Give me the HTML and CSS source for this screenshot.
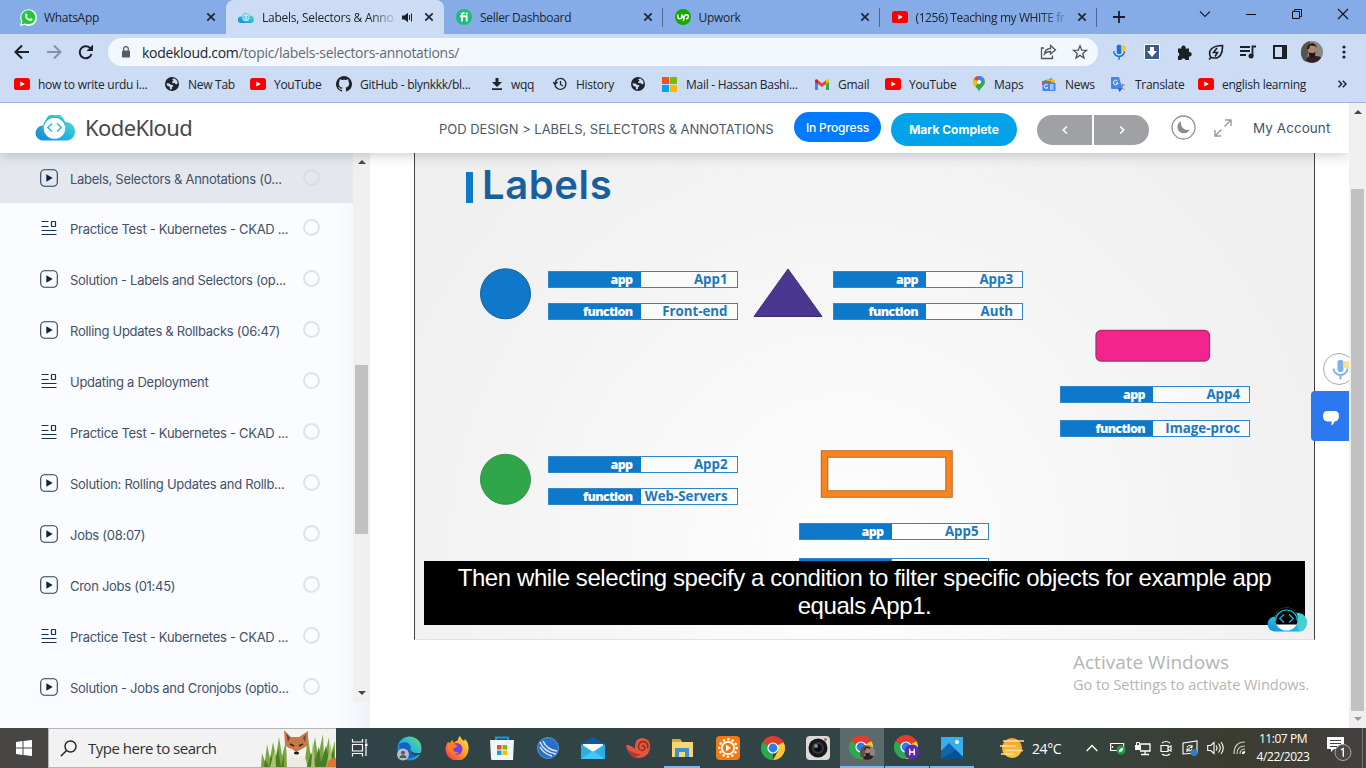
FILE: index.html
```
<!DOCTYPE html>
<html lang="en">
<head>
<meta charset="utf-8">
<title>Labels, Selectors &amp; Annotations</title>
<link rel="stylesheet" href="styles.css">
</head>
<body>
<svg class="sprite" width="0" height="0" aria-hidden="true">
  <defs>
    <linearGradient id="cloudGrad" x1="0" y1="1" x2="1" y2="0"><stop offset="0" stop-color="#1686d9"/><stop offset=".5" stop-color="#21bbe0"/><stop offset="1" stop-color="#6fe0c0"/></linearGradient>
    <linearGradient id="edgeGrad" x1="0" y1="1" x2="1" y2="0"><stop offset="0" stop-color="#0b5fc0"/><stop offset=".5" stop-color="#22b4e8"/><stop offset="1" stop-color="#6be06a"/></linearGradient>
    <linearGradient id="fireGrad" x1="1" y1="0" x2="0" y2="1"><stop offset="0" stop-color="#ffe94a"/><stop offset=".5" stop-color="#ff9422"/><stop offset="1" stop-color="#f0255e"/></linearGradient>
    <linearGradient id="sunGrad" x1="0" y1="0" x2="0" y2="1"><stop offset="0" stop-color="#f7a02c"/><stop offset="1" stop-color="#ffc53d"/></linearGradient>
  </defs>
  <symbol id="yt" viewBox="0 0 16 12"><rect width="16" height="12" rx="2.6" fill="#f00"/><path d="M6.3 3.4v5.2L10.8 6z" fill="#fff"/></symbol>
  <symbol id="x" viewBox="0 0 10 10"><path d="M1.3 1.3l7.4 7.4M8.7 1.3L1.3 8.7" stroke="#20242c" stroke-width="1.7"/></symbol>
  <symbol id="globe" viewBox="0 0 14 14"><circle cx="7" cy="7" r="7" fill="#20242a"/><path d="M1.5 6.3l3 .2 1.3 1.3 2 .2.6 1.2-1.5 1L7 12 5 12.4 4.700 9.700 2.200 8.700zM7 2l2.700-.4 2.600 2.500.2 2.600-1.700.8-.9-1.500-2 .2-1-1.300 1.600-1.200z" fill="#ccdcf5"/></symbol>
  <symbol id="cloud" viewBox="0 0 40 26"><path d="M8 25.500a7.500 7.500 0 0 1 0-15h2a10 10 0 0 1 20-3.500c6 0 10 4 10 9.500s-4 9-8 9z" fill="url(#cloudGrad)"/><circle cx="19.500" cy="13" r="10.800" fill="#fff"/><path d="M8.500 10.500a11.400 11.400 0 0 1 22 0" fill="none" stroke="#1fbadc" stroke-width="1.200"/><path d="M17 8.500l-4.300 4L17 16.500M22 8.500l4.300 4L22 16.500" fill="none" stroke="#24b3de" stroke-width="1.300"/></symbol>
  <symbol id="play" viewBox="0 0 18 18"><rect x=".7" y=".7" width="16.600" height="16.600" rx="4" fill="none" stroke="#253c5a" stroke-width="1.100"/><path d="M6.300 5.300v7.400l6.400-3.700z" fill="#0e2340"/></symbol>
  <symbol id="quiz" viewBox="0 0 18 18"><path d="M1.500 2.500h7M1.500 7.500h7M1.500 11.500h15M1.500 15.500h15" stroke="#1c2f4a" stroke-width="1.200"/><rect x="11.500" y="2.500" width="4" height="5" rx=".5" fill="none" stroke="#1c2f4a" stroke-width="1.200"/></symbol>
  <symbol id="mic" viewBox="0 0 18 22"><rect x="5.500" y="1" width="6" height="12" rx="2" fill="#1a73d8"/><path d="M1.500 9.500a7 6.500 0 0 0 14 0M8.500 16v4.500" fill="none" stroke="#1a73d8" stroke-width="2"/><rect x="11.500" y="2" width="6" height="7" rx="1.500" fill="#fbc62d"/></symbol>
  <symbol id="chrome" viewBox="0 0 24 24"><path d="M12 12L1.600 6A12 12 0 0 1 22.400 6z" fill="#e33b2e"/><path d="M12 12L1.600 6A12 12 0 0 0 12 24z" fill="#2da94f"/><path d="M12 12l10.400-6A12 12 0 0 1 12 24L17 15z" fill="#fcc934"/><path d="M12 6.500h10.600L22 5H12z" fill="#e33b2e"/><circle cx="12" cy="12" r="5.600" fill="#fff"/><circle cx="12" cy="12" r="4.400" fill="#2b7de9"/></symbol>
  <symbol id="face" viewBox="0 0 22 22"><circle cx="11" cy="11" r="11" fill="#8a8780"/><path d="M0 11a11 11 0 0 1 9-11l-1 8-3 13A11 11 0 0 1 0 11z" fill="#55544f"/><path d="M5 20c0-4 3-5 6-5s9 0 9 2a11 11 0 0 1-15 3z" fill="#361c28"/><path d="M7 5c1-4 8-4 8 0l-.5 6c-1 3-2 4-3.500 4s-3.500-2-4-4z" fill="#b3836c"/><path d="M6.500 8c-1-7 9-8 9-1l-1.500-2-5-.5L8 8zM7.500 11l1 4 2.700 2 2.800-2 .5-4-2 1h-3z" fill="#1b1816"/></symbol>
</svg>

<div class="tabs">
  <div class="tab">
    <svg width="17" height="17" viewBox="0 0 17 17"><path d="M0 17l1.300-4.500A8.300 8.300 0 1 1 4.500 15.800z" fill="#fff"/><path d="M1.600 15.400l.9-3.200a7 7 0 1 1 2.500 2.300z" fill="#25c73a"/><path d="M5.500 4.500l1.300 0 .8 2-.8 1c.7 1.300 1.500 2 2.800 2.600l1-1 1.900 1-.2 1.300c-4 2-9-3.500-6.800-6.900z" fill="#fff"/></svg>
    <span class="tab-title">WhatsApp</span><svg class="close" width="10" height="10"><use href="#x"/></svg>
  </div>
  <div class="tab active">
    <svg width="16" height="11" viewBox="0 0 16 11"><path d="M3 11a3 3 0 0 1 0-6.500h1a4.200 4.200 0 0 1 8-1c3 0 4 2 4 4S14.500 11 13 11z" fill="url(#cloudGrad)"/><circle cx="8" cy="5.500" r="3.700" fill="#a9e3f3"/><path d="M7 4L5.700 5.500 7 7M9 4l1.300 1.500L9 7" fill="none" stroke="#2ba9d8" stroke-width=".8"/></svg>
    <span class="tab-title fade">Labels, Selectors &amp; Anno</span>
    <svg class="speaker" width="11" height="11" viewBox="0 0 11 11"><path d="M0 3.500h2.500L6 .8v9.400L2.500 7.500H0z" fill="#1c2026"/><path d="M7.500 3v5M9.500 1.500v8" stroke="#1c2026"/></svg>
    <svg class="close" width="10" height="10"><use href="#x"/></svg>
  </div>
  <div class="tab ruled">
    <svg width="16" height="16" viewBox="0 0 16 16"><circle cx="8" cy="8" r="8" fill="#1dbf73"/><path d="M6 12.500V5.500q0-1.700 2.500-1.500M4 7.300h6.700v5.200" fill="none" stroke="#fff" stroke-width="1.900"/><circle cx="10.800" cy="4.600" r="1.100" fill="#fff"/></svg>
    <span class="tab-title">Seller Dashboard</span><svg class="close" width="10" height="10"><use href="#x"/></svg>
  </div>
  <div class="tab ruled">
    <svg width="16" height="16" viewBox="0 0 16 16"><circle cx="8" cy="8" r="8" fill="#14a800"/><path d="M2.800 5.500v2.200a2 2 0 0 0 4 0V5.500q1 3 3 4M8.300 12l1.200-5a2 2 0 1 1 1.500 2.700" fill="none" stroke="#fff" stroke-width="1.500"/></svg>
    <span class="tab-title">Upwork</span><svg class="close" width="10" height="10"><use href="#x"/></svg>
  </div>
  <div class="tab ruled">
    <svg width="16" height="12"><use href="#yt"/></svg>
    <span class="tab-title fade">(1256) Teaching my WHITE fr</span><svg class="close" width="10" height="10"><use href="#x"/></svg>
  </div>
  <div class="tab-add"><svg width="12" height="12" viewBox="0 0 12 12"><path d="M6 0v12M0 6h12" stroke="#1c2026" stroke-width="1.800"/></svg></div>
  <div class="win-controls">
    <svg width="46" height="28" viewBox="0 0 46 28"><path d="M18 11.500l5 5 5-5" fill="none" stroke="#16202e" stroke-width="1.100"/></svg>
    <svg width="46" height="28" viewBox="0 0 46 28"><path d="M18 14.500h10" stroke="#111"/></svg>
    <svg width="46" height="28" viewBox="0 0 46 28"><path d="M18.500 11.500h7v7h-7zM20.500 11.500v-2h7v7h-2" fill="none" stroke="#111"/></svg>
    <svg width="46" height="28" viewBox="0 0 46 28"><path d="M18 9l10 10M28 9L18 19" stroke="#111" stroke-width="1.100"/></svg>
  </div>
</div>

<div class="toolbar">
  <svg class="nav-icons" width="108" height="36" viewBox="0 0 108 36"><g fill="none" stroke="#1b1f26" stroke-width="2"><path d="M29 18H16.500M22 11.500L15.500 18l6.500 6.500"/><path d="M47 18h12.500M54 11.500l6.500 6.500-6.500 6.500" stroke="#8391aa"/><path d="M91.500 20a6 6 0 1 1-1.500-6"/></g><path d="M93 10.500v6.500h-6.500z" fill="#1b1f26"/></svg>
  <div class="address">
    <svg width="8" height="12" viewBox="0 0 8 12"><rect y="4.500" width="8" height="7" rx="1" fill="#585c62"/><path d="M1.700 5V3a2.300 2.300 0 0 1 4.600 0v2" fill="none" stroke="#585c62" stroke-width="1.200"/></svg>
    <span class="url"><b>kodekloud.com</b>/topic/labels-selectors-annotations/</span>
    <svg width="48" height="18" viewBox="0 0 48 18"><g fill="none" stroke="#50545b" stroke-width="1.300"><path d="M4 5H1.500v10.500h11v-3"/><path d="M4.500 11c.5-4 3-5.500 6-5.500v-3L15.500 7l-5 4V8.500c-3 0-4.500.5-6 2.500z"/><path d="M40 2.800l1.700 4.400 4.700.2-3.700 3 1.300 4.600-4-2.600-4 2.600 1.300-4.600-3.700-3 4.700-.2z"/></g></svg>
  </div>
  <div class="extensions">
    <svg width="15" height="17" viewBox="0 0 18 22"><use href="#mic" width="18" height="22"/></svg>
    <svg width="16" height="16" viewBox="0 0 16 16"><rect x=".5" y=".5" width="15" height="15" fill="#3d5990" stroke="#fff"/><path d="M6 3h4v4h3l-5 6-5-6h3z" fill="#fff"/></svg>
    <svg width="15" height="15" viewBox="0 0 15 15"><path d="M1 3.500h3.500a2.200 2.200 0 1 1 4 0H12v3.700a2.200 2.200 0 1 1 0 4.300v3.500H8.500a2.300 2.300 0 0 0-4.300 0H1v-3.700a2.200 2.200 0 0 0 0-4z" fill="#1c2026"/></svg>
    <svg width="16" height="16" viewBox="0 0 16 16"><path d="M3 13.500C-1 7 4 1.500 14.500 1.500c.5 8-3 13-8 12.500-1.500 0-2.500-.5-3.500-.5zL1 15.500M9 4l-3.500 4.500h4L7 12.500" fill="none" stroke="#1c2026" stroke-width="1.600"/></svg>
    <svg width="16" height="14" viewBox="0 0 16 14"><path d="M0 2h10M0 6h10M0 10h6M12.500 11V1.500H16" fill="none" stroke="#1c2026" stroke-width="1.800"/><circle cx="11" cy="11" r="2.500" fill="#1c2026"/></svg>
    <svg width="14" height="14" viewBox="0 0 14 14"><rect x="1" y="1" width="12" height="12" fill="none" stroke="#1c2026" stroke-width="2"/><path d="M9 1h4v12H9z" fill="#1c2026"/></svg>
    <svg width="22" height="22"><use href="#face"/></svg>
    <svg width="4" height="14" viewBox="0 0 4 14"><g fill="#1c2026"><circle cx="2" cy="2" r="1.600"/><circle cx="2" cy="7" r="1.600"/><circle cx="2" cy="12" r="1.600"/></g></svg>
  </div>
</div>

<div class="bookmarks">
  <span class="bm"><svg width="16" height="12"><use href="#yt"/></svg>how to write urdu i...</span>
  <span class="bm wide"><svg width="14" height="14"><use href="#globe"/></svg>New Tab</span>
  <span class="bm"><svg width="16" height="12"><use href="#yt"/></svg>YouTube</span>
  <span class="bm"><svg width="16" height="16" viewBox="0 0 16 16"><path d="M8 0a8 8 0 0 0-2.500 15.600c.4 0 .5-.2.500-.4v-1.500c-2.200.5-2.700-1-2.700-1-.4-1-.9-1.200-.9-1.200-.7-.5.1-.5.1-.5.800 0 1.200.8 1.200.8.700 1.300 1.900.9 2.300.7.100-.5.300-.9.500-1.100-1.800-.2-3.600-.9-3.600-4 0-.8.300-1.500.8-2.100-.1-.200-.4-1 .1-2.100 0 0 .7-.2 2.200.8a7.600 7.600 0 0 1 4 0c1.500-1 2.200-.8 2.200-.8.500 1.100.2 1.900.1 2.100.5.600.8 1.300.8 2.100 0 3.100-1.900 3.800-3.600 4 .3.200.5.700.5 1.500v2.300c0 .2.100.5.500.4A8 8 0 0 0 8 0z" fill="#20242a"/></svg>GitHub - blynkkk/bl...</span>
  <span class="bm wide"><svg width="10" height="12" viewBox="0 0 10 12"><path d="M3.500 0h3v4H10L5 9 0 4h3.500zM0 10.300h10V12H0z" fill="#20242a"/></svg>wqq</span>
  <span class="bm wide"><svg width="14" height="14" viewBox="0 0 14 14"><path d="M2 8a5.500 5.500 0 1 0 1-4.500L2 7M0 5l2 2.500L4.500 5M7.500 4v3.500l2.500 1.500" fill="none" stroke="#20242a" stroke-width="1.300"/></svg>History</span>
  <span class="bm"><svg width="14" height="14"><use href="#globe"/></svg></span>
  <span class="bm wide"><svg width="15" height="15" viewBox="0 0 15 15"><path d="M0 0h7v7H0z" fill="#f25022"/><path d="M8 0h7v7H8z" fill="#7fba00"/><path d="M0 8h7v7H0z" fill="#00a4ef"/><path d="M8 8h7v7H8z" fill="#ffb900"/></svg>Mail - Hassan Bashi...</span>
  <span class="bm wide"><svg width="14" height="11" viewBox="0 0 14 11"><path d="M0 1.500L3 3v8H0z" fill="#4285f4"/><path d="M14 1.500L11 3v8h3z" fill="#34a853"/><path d="M3 1.200l4 3 4-3V5L7 8 3 5z" fill="#ea4335"/><path d="M0 1.500Q.8-.7 3 1v4L0 3z" fill="#c5221f"/><path d="M14 1.500Q13.200-.7 11 1v4l3-2z" fill="#fbbc04"/></svg>Gmail</span>
  <span class="bm"><svg width="16" height="12"><use href="#yt"/></svg>YouTube</span>
  <span class="bm wide"><svg width="12" height="16" viewBox="0 0 12 16"><path d="M6 16C5.500 12 0 10 0 6a6 6 0 0 1 12 0c0 4-5.500 6-6 10z" fill="#34a853"/><path d="M0 6a6 6 0 0 1 2-4.500l4 4.500-4 5Q0 9 0 6z" fill="#fbbc04"/><path d="M1 3a6 6 0 0 1 5-3v6z" fill="#ea4335"/><path d="M6 0q4 0 5.500 3.500L7.500 8 4 4z" fill="#4285f4"/><circle cx="6" cy="6" r="2" fill="#fff"/></svg>Maps</span>
  <span class="bm wide"><svg width="14" height="13" viewBox="0 0 14 13"><path d="M1 3l9-3 1 5H2z" fill="#34a853"/><path d="M5 1l8 1-1 5H5z" fill="#fbbc04"/><path d="M0 3h9v4H0z" fill="#ea4335"/><rect x=".5" y="4.500" width="13" height="8.500" rx="1" fill="#4285f4"/><path d="M5.800 7a2 2 0 1 0 .2 2.500H4.500M8 7h3.500M8 9h3.500M8 11h3.500" fill="none" stroke="#fff"/></svg>News</span>
  <span class="bm wide"><svg width="15" height="15" viewBox="0 0 15 15"><rect x="6" y="4" width="9" height="11" rx="1" fill="#d7dbe1"/><path d="M9 8h5M11.500 7v1c0 2-1 3.500-3 4.500M10 9c1 2 2 3 3.500 3.500" stroke="#7a828e" fill="none"/><path d="M1 0h7l3.500 12H1a1 1 0 0 1-1-1V1a1 1 0 0 1 1-1z" fill="#4285f4"/><path d="M7 11.500h4.500L8.500 15z" fill="#2a56c6"/><path d="M6.500 4a2.300 2.300 0 1 0 .5 2H4.800" stroke="#fff" fill="none"/></svg>Translate</span>
  <span class="bm"><svg width="16" height="12"><use href="#yt"/></svg>english learning</span>
  <svg class="more" width="9" height="8" viewBox="0 0 9 8"><path d="M.5.7L3.700 4 .5 7.300M4.800.7L8 4 4.800 7.300" fill="none" stroke="#20242a" stroke-width="1.500"/></svg>
</div>

<div class="page">
  <div class="site">
    <header class="header">
      <svg class="brand-mark" width="40" height="26"><use href="#cloud"/></svg>
      <span class="brand">KodeKloud</span>
      <span class="crumbs">POD DESIGN &gt; LABELS, SELECTORS &amp; ANNOTATIONS</span>
      <span class="pill progress">In Progress</span>
      <span class="pill complete">Mark Complete</span>
      <span class="pager"><i><svg width="6" height="8" viewBox="0 0 6 8"><path d="M4.800.5L1.300 4l3.500 3.500" fill="none" stroke="#fff" stroke-width="1.600"/></svg></i><i><svg width="6" height="8" viewBox="0 0 6 8"><path d="M1.200.5L4.700 4 1.200 7.500" fill="none" stroke="#fff" stroke-width="1.600"/></svg></i></span>
      <svg class="moon" width="25" height="25" viewBox="0 0 25 25"><circle cx="12.500" cy="12.500" r="11.500" fill="none" stroke="#8e9094" stroke-width="1.300"/><path d="M10 6.200a6.400 6.400 0 1 0 8.700 8.300c-5 1.800-9.500-2.500-8.700-8.300z" fill="#898b90"/></svg>
      <svg class="expand" width="18" height="18" viewBox="0 0 18 18"><path d="M10.500 7.500L17 1M11 1h6v6M7.500 10.500L1 17M1 11v6h6" fill="none" stroke="#97999e" stroke-width="1.400"/></svg>
      <span class="account">My Account</span>
    </header>
    <div class="body">
      <aside class="sidebar">
        <ul class="lessons">
          <li class="current"><svg><use href="#play"/></svg><span>Labels, Selectors &amp; Annotations (0...</span><i></i></li>
          <li><svg><use href="#quiz"/></svg><span>Practice Test - Kubernetes - CKAD ...</span><i></i></li>
          <li><svg><use href="#play"/></svg><span>Solution - Labels and Selectors (op...</span><i></i></li>
          <li><svg><use href="#play"/></svg><span>Rolling Updates &amp; Rollbacks (06:47)</span><i></i></li>
          <li><svg><use href="#quiz"/></svg><span>Updating a Deployment</span><i></i></li>
          <li><svg><use href="#quiz"/></svg><span>Practice Test - Kubernetes - CKAD ...</span><i></i></li>
          <li><svg><use href="#play"/></svg><span>Solution: Rolling Updates and Rollb...</span><i></i></li>
          <li><svg><use href="#play"/></svg><span>Jobs (08:07)</span><i></i></li>
          <li><svg><use href="#play"/></svg><span>Cron Jobs (01:45)</span><i></i></li>
          <li><svg><use href="#quiz"/></svg><span>Practice Test - Kubernetes - CKAD ...</span><i></i></li>
          <li><svg><use href="#play"/></svg><span>Solution - Jobs and Cronjobs (optio...</span><i></i></li>
        </ul>
        <div class="bar side-bar">
          <b class="up"></b><div class="thumb"></div><b class="down"></b>
        </div>
      </aside>
      <main class="main">
        <div class="slide">
          <h1 class="slide-title">Labels</h1>
          <svg class="shapes" width="901" height="487" viewBox="414 153 901 487">
            <circle cx="505.500" cy="293.800" r="25" fill="#0f78cb" stroke="#1b5f98"/>
            <circle cx="505.500" cy="479.300" r="25" fill="#2fa64a" stroke="#3b8f50"/>
            <path d="M788 269l34 47.500h-68z" fill="#4a3790" stroke="#3d2f72"/>
            <rect x="1096" y="330.500" width="113.500" height="30.500" rx="5" fill="#f2258c" stroke="#b52b70" stroke-width="1.300"/>
            <rect x="824.500" y="454" width="124.500" height="40" fill="none" stroke="#ba6527" stroke-width="7.500"/>
            <rect x="824.500" y="454" width="124.500" height="40" fill="none" stroke="#f9831f" stroke-width="5.500"/>
          </svg>
          <div class="tags t1"><p><b>app</b><span>App1</span></p><p><b>function</b><span>Front-end</span></p></div>
          <div class="tags t3"><p><b>app</b><span>App3</span></p><p><b>function</b><span>Auth</span></p></div>
          <div class="tags t4"><p><b>app</b><span>App4</span></p><p><b>function</b><span>Image-proc</span></p></div>
          <div class="tags t2"><p><b>app</b><span>App2</span></p><p><b>function</b><span>Web-Servers</span></p></div>
          <div class="tags t5"><p><b>app</b><span>App5</span></p><p><b></b><span></span></p></div>
          <div class="caption">Then while selecting specify a condition to filter specific objects for example app<br>equals App1.</div>
          <svg class="watermark" width="40" height="26" viewBox="0 0 40 26"><path d="M8 25.500a7.500 7.500 0 0 1 0-15h24a7.500 7.500 0 0 1 0 15z" fill="url(#cloudGrad)"/><path d="M28 7c7-1 12 3.500 12 9s-4 9.500-8 9.500z" fill="#45cfd0"/><circle cx="19.500" cy="13" r="11.500" fill="#fff"/><path d="M9.500 18.500a11.500 11.500 0 1 1 20 0z" fill="#000"/><path d="M8.500 15a11 11 0 1 1 22 0" fill="none" stroke="#1db8dc" stroke-width="1.200"/><path d="M17 8.500l-4.300 4L17 16.500M22 8.500l4.300 4L22 16.500" fill="none" stroke="#24b3de" stroke-width="1.300"/></svg>
        </div>
        <div class="activate"><p>Activate Windows</p><small>Go to Settings to activate Windows.</small></div>
      </main>
    </div>
    <div class="voice"><svg width="18" height="22"><use href="#mic"/></svg></div>
    <div class="chat"><svg width="16" height="15" viewBox="0 0 16 15"><path d="M4.500 0h7q4.500 0 4.500 5t-4.500 5.500q-.5 2.500-3 4V10.500h-4Q0 10 0 5t4.500-5z" fill="#fff"/></svg></div>
  </div>
  <div class="bar page-bar"><b class="up"></b><div class="thumb"></div><b class="down pale"></b></div>
</div>

<div class="taskbar">
  <div class="start"><svg width="16" height="16" viewBox="0 0 16 16"><path d="M0 2l6.500-1v6.500H0zM7.500.9L16 0v7.500H7.500zM0 8.500h6.500V15L0 14zM7.500 8.500H16V16l-8.500-1z" fill="#fff"/></svg></div>
  <div class="search">
    <svg width="17" height="17" viewBox="0 0 17 17"><circle cx="10.500" cy="6.500" r="5.500" fill="none" stroke="#222" stroke-width="1.400"/><path d="M6.500 10.500L.8 16.200" stroke="#222" stroke-width="1.500"/></svg>
    <span>Type here to search</span>
    <svg class="fox" width="76" height="38" viewBox="0 0 76 38"><path d="M1 38L2 24l3 9L7 15l3 15 3-17 3 15 3-20 3 19 4-15 1 26zM44 38l4-30 3 22 4-22 3 20 5-23 1 25 5-22 1 20 5-16v26z" fill="#7ba63d"/><path d="M4 38l1-8 4 8 2-13 3 13 4-19 3 19 3-12v12zM47 38l4-15 3 10 5-15 2 15 5-16 3 13 5-9 1 17z" fill="#4c7c2a"/><path d="M10 38l5-18 1 18zM66 38l5-24 1 24zM51 38l2-25 2 25z" fill="#a9c570"/><path d="M67 38c0-6 3-9 9-9v9z" fill="#d97830"/><path d="M28 38c0-9 3-14 9-14s10 5 10 14z" fill="#efe9e3"/><path d="M24 1l7 7h8l9-6 0 14-4 6-7 5-6-4-6-8z" fill="#c67a48"/><path d="M26 4l4 5-2 4zM46 5l-3 4 2 4z" fill="#6d4230"/><path d="M26 18l6 2 4 3 4-2 7-4-5 10-6 3-5-4z" fill="#f6f1ec"/><path d="M30 15l4 2M43 15l-4 2" stroke="#3a2112" stroke-width="1.500"/><ellipse cx="36.500" cy="24" rx="2.600" ry="1.600" fill="#201a18"/></svg>
  </div>
  <div class="apps">
    <span><svg width="18" height="18" viewBox="0 0 18 18"><path d="M1.500 0v3h10V0M1.500 17.500v-3h10v3M1.500 5.500h10v6.500h-10zM15 0v4M15 7v10" fill="none" stroke="#fff" stroke-width="1.200"/><path d="M14 4.500h2.500V7H14z" fill="#fff"/></svg></span>
    <span><svg width="25" height="25" viewBox="0 0 25 25"><circle cx="12.500" cy="12.500" r="12" fill="url(#edgeGrad)"/><path d="M2 8q10-5 12 4c-2 2 0 5 4 5h5a12 12 0 0 1-20-1z" fill="#1762bd"/><path d="M14 12q-1 5 5 5h5a12 12 0 0 1-2 2q-10 1-8-7z" fill="#304247"/><circle cx="6" cy="18.500" r="6" fill="#b9bec3"/><circle cx="6" cy="16.700" r="2" fill="#535a61"/><path d="M2.500 22a3.500 3 0 0 1 7 0z" fill="#535a61"/></svg></span>
    <span><svg width="24" height="24" viewBox="0 0 24 24"><path d="M3 6l2 1q1-2 3-3v3l5-3q0-3 2-4 1 3 4 5l1-2q4 4 3.500 10A11.500 11.500 0 1 1 3 6z" fill="url(#fireGrad)"/><circle cx="11.500" cy="13" r="6" fill="#7a3de0"/><path d="M3 8q6-1 10 2l-5 3q1 4 6 3-4 5-9 1-3-4-2-9z" fill="#ff7b28"/></svg></span>
    <span><svg width="24" height="24" viewBox="0 0 24 24"><path d="M6 5V1.500h12V5" fill="none" stroke="#1599dc" stroke-width="2"/><path d="M0 4h24l-1 20H2q-1 0-1-2z" fill="#f3f4f5"/><path d="M7 9h4.500v4.500H7z" fill="#f25022"/><path d="M12.500 9H17v4.500h-4.500z" fill="#7fba00"/><path d="M7 14.500h4.500V19H7z" fill="#00a4ef"/><path d="M12.500 14.500H17V19h-4.500z" fill="#ffb900"/></svg></span>
    <span><svg width="22" height="22" viewBox="0 0 22 22"><circle cx="11" cy="11" r="10.500" fill="#2870c7" stroke="#5c94d6"/><path d="M3 5q4 10 16 12M6 4q4 9 14 10M3 10q4 7 12 9" fill="none" stroke="#dbe9f7" stroke-width="1.500"/></svg></span>
    <span><svg width="24" height="22" viewBox="0 0 24 22"><path d="M0 7l12-7 12 7v6H0z" fill="#0a5aa6"/><path d="M2 7h20v7L12 19 2 14z" fill="#f4f7f9"/><path d="M0 7l12 8 12-8v15H0z" fill="#2cade8"/><path d="M0 22L12 14l12 8z" fill="#47c5f5"/><path d="M2 7h20l-10 7z" fill="#fff"/></svg></span>
    <span><svg width="24" height="22" viewBox="0 0 24 22"><path d="M0 8q5 0 9 4Q8 1 17 1q7 1 7 8 0 11-11 12Q3 21 0 8z" fill="#e4573f"/><path d="M2 12q5 5 13 5-5 4-9 2-3-3-4-7z" fill="#b9352b"/><path d="M16 9.500q1-2 2.500 0t-1.500 4q-5 0-4.500-4.500T18 4.500q5 2 3.500 7" fill="none" stroke="#96281f" stroke-width="1.400"/></svg></span>
    <span class="open split"><svg width="22" height="20" viewBox="0 0 22 20"><path d="M1 1h8l2 3h11v15H1z" fill="#f7d774"/><path d="M1 1h8l2 3H1z" fill="#e0a42b"/><path d="M4 10h14v9h-4v-5H8v5H4z" fill="#3b91d2"/></svg></span>
    <span><svg width="24" height="24" viewBox="0 0 24 24"><rect width="24" height="24" rx="4" fill="#f6790f"/><circle cx="12" cy="12" r="8.700" fill="none" stroke="#fff" stroke-width="2.600" stroke-linecap="round" stroke-dasharray=".1 4.455"/><circle cx="12" cy="12" r="6.200" fill="none" stroke="#fff" stroke-width="1.800"/><path d="M10 8.800l5 3.200-5 3.200z" fill="#fff"/></svg></span>
    <span><svg width="24" height="24"><use href="#chrome"/></svg></span>
    <span><svg width="24" height="24" viewBox="0 0 24 24"><rect width="24" height="24" rx="4" fill="#dcdad9"/><circle cx="12" cy="12" r="9.500" fill="#171719"/><circle cx="12" cy="12" r="6" fill="#35363c"/><circle cx="12" cy="12" r="3.700" fill="#0b0b10"/><circle cx="10" cy="10" r="2" fill="#7b8da2"/><circle cx="19.500" cy="3.500" r="1.300" fill="#c54236"/></svg></span>
    <span class="open focus"><svg width="26" height="26" viewBox="0 0 26 26"><use href="#chrome" width="24" height="24"/><use href="#face" x="11" y="10" width="15" height="15"/></svg></span>
    <span class="open"><svg width="26" height="26" viewBox="0 0 26 26"><use href="#chrome" width="24" height="24"/><circle cx="18" cy="17" r="7.500" fill="#5b2da3"/><path d="M15.700 13.700v6.600M20.300 13.700v6.600M15.700 17h4.600" stroke="#fff" stroke-width="1.300"/></svg></span>
    <span class="open"><svg width="22" height="22" viewBox="0 0 22 22"><path d="M0 0h22v22H0z" fill="#38aef0"/><path d="M0 14l8-8 14 14v2H0z" fill="#1064ad"/><path d="M0 22L15 13l7 7v2z" fill="#074781" opacity=".7"/><circle cx="16" cy="5" r="2" fill="#fff"/></svg></span>
  </div>
  <div class="tray">
    <svg width="24" height="20" viewBox="0 0 24 20"><circle cx="12" cy="10" r="10" fill="url(#sunGrad)"/><path d="M3 3h21M0 8h16M5 12.500h18M1 16h13" stroke="#ffe0a0" stroke-width="1.700"/></svg>
    <span class="temp">24°C</span>
    <svg width="12" height="8" viewBox="0 0 12 8"><path d="M.7 7L6 1.500 11.300 7" fill="none" stroke="#fff" stroke-width="1.300"/></svg>
    <svg width="16" height="14" viewBox="0 0 16 14"><path d="M.6 2.500h13v7H.6zM2.500 5v2" fill="none" stroke="#fff" stroke-width="1.200"/><circle cx="11" cy="9" r="4.500" fill="#1e9a48"/><path d="M8.800 11.500q0-4.500 4.500-5 0 4.500-3.500 4.500" fill="#d7f0dd"/></svg>
    <svg width="16" height="15" viewBox="0 0 16 15"><path d="M5 3h10v7H5M10 10v3.500M6 13.500h8" fill="none" stroke="#fff" stroke-width="1.300"/><path d="M0 4h6v5H0z" fill="#fff"/><path d="M1.500 4V1.500h3V4" fill="none" stroke="#fff"/></svg>
    <svg width="12" height="17" viewBox="0 0 12 17"><path d="M1 5.500h7v6H1zM8 7.500l3-1.500v5l-3-1.500M2 3q4-3 8 0M2 14q4 3 8 0" fill="none" stroke="#fff" stroke-width="1.200"/></svg>
    <svg width="16" height="16" viewBox="0 0 16 16"><path d="M1 3l14-2v12L1 14zM5 7q3-3 5 0M10 5v2.500H7.500M5 12V9h3M5 9q3 4 5 0" fill="none" stroke="#fff" stroke-width="1.100"/><circle cx="12" cy="12.500" r="3.500" fill="#317bd0"/></svg>
    <svg width="17" height="14" viewBox="0 0 17 14"><path d="M.7 4.500h3L7 1.500v11L3.700 9.500h-3zM9 4.500q2 2.500 0 5M11.500 2.500q3.500 4.500 0 9M14 1q4.500 6 0 12" fill="none" stroke="#fff" stroke-width="1.100"/></svg>
    <svg width="14" height="14" viewBox="0 0 14 14"><g fill="none" stroke="#c9cbc8" stroke-width="1.200"><path d="M1 13Q1 1 12 1M4 13q0-8 8-8M7 13q0-5 5-5"/><path d="M10 13q0-2 2-2" stroke="#fff" stroke-width="2"/></g></svg>
    <span class="clock">11:07 PM<br>4/22/2023</span>
    <svg width="26" height="26" viewBox="0 0 26 26"><path d="M0 2h17v12H7l-3 3v-3H0z" fill="#fff"/><path d="M3 5.500h11M3 8.500h11M3 11.500h7" stroke="#42413b"/><circle cx="16" cy="17.500" r="8" fill="#4a4947" stroke="#a8a8a6"/><path d="M14 14.800l2.300-1.400v8.400" fill="none" stroke="#fff" stroke-width="1.400"/></svg>
    <i class="peek"></i>
  </div>
</div>
</body>
</html>
```
FILE: styles.css
```
* { box-sizing: border-box; }
body {
  margin: 0; width: 1366px; height: 768px; overflow: hidden;
  display: flex; flex-direction: column;
  font-family: "Open Sans", "Noto Sans", sans-serif; font-size: 12px; color: #20242c;
  background: #fff;
}
p, ul, h1 { margin: 0; padding: 0; }
svg { flex: none; display: block; }
.sprite { position: absolute; }

/* tab strip */
.tabs {
  height: 34px; flex: none; background: #86ace8; display: grid;
  grid-template-columns: 226px 218px 218.500px 217px 217px 44px 1fr;
}
.tab { display: flex; align-items: center; padding: 0 10px 0 12px; letter-spacing: -.3px; min-width: 0; }
.tab:first-child { padding-left: 20px; }
.tab-title { flex: 1; margin: 0 8px; white-space: nowrap; }
.tab:first-child .tab-title { margin-left: 7px; }
.active .tab-title { letter-spacing: -.25px; }
.ruled { position: relative; }
.ruled .fade { letter-spacing: -.4px; }
.ruled::after { content: ""; position: absolute; right: 0; top: 8px; width: 1px; height: 19px; background: #4d6791; }
.active { background: #ccdcf5; border-radius: 8px 8px 0 0; }
.active .speaker { margin: 0 11px 0 -1px; }
.fade { -webkit-mask-image: linear-gradient(90deg, #000 82%, transparent 102%); mask-image: linear-gradient(90deg, #000 82%, transparent 102%); }
.tab-add { display: flex; align-items: center; justify-content: center; }
.win-controls { display: flex; justify-content: flex-end; }

/* toolbar */
.toolbar { height: 36px; flex: none; background: #ccdcf5; display: flex; align-items: center; }
.address {
  width: 990px; height: 28px; border-radius: 14px; background: #f3f7fe;
  display: flex; align-items: center; padding: 0 10px 0 14px;
}
.url { flex: 1; margin-left: 12px; font-size: 14px; color: #666a70; letter-spacing: -.3px; }
.url b { font-weight: 400; color: #20242c; }
.extensions {
  flex: 1; display: grid; grid-template-columns: 42px 24px 40px 24px 40px 24px 40px 1fr;
  align-items: center; justify-items: center; padding-right: 11px;
}
.bookmarks {
  height: 33px; flex: none; background: #ccdcf5; border-bottom: 1px solid #9db3da; padding: 0 0 4px 14px;
  display: grid; align-items: center; letter-spacing: -.28px;
  grid-template-columns: 151px 85px 86px 156px 61px 78px 31px 153px 70px 88px 69px 69px 87px 140px 1fr;
}
.bm { display: flex; align-items: center; gap: 8px; white-space: nowrap; }
.wide { gap: 9px; }

/* page */
.page { height: 625px; flex: none; display: flex; }
.site { width: 1349px; display: flex; flex-direction: column; position: relative; overflow: hidden; }
.header {
  height: 50px; flex: none; background: #fff; position: relative; z-index: 2; display: flex; align-items: center;
  box-shadow: 0 2px 12px rgba(40, 50, 80, .25); font-family: Inter, sans-serif;
}
.header > * { flex: none; }
.brand-mark { margin-left: 35px; }
.brand { width: 364px; padding: 0 0 2px 10px; font: 400 22px/28px "Noto Sans", sans-serif; color: #484848; letter-spacing: -.6px; }
.crumbs { width: 355px; padding-top: 2px; font-size: 13px; letter-spacing: -.03px; color: #4d5868; white-space: nowrap; }
.pill { display: flex; align-items: center; justify-content: center; color: #fff; border-radius: 17px; white-space: nowrap; }
.progress { width: 87px; height: 30px; background: #007bff; font-size: 12px; font-weight: 500; letter-spacing: -.15px; margin: -2px 10px 0 0; }
.complete { width: 126px; height: 33px; background: #02a3e8; font-size: 12px; font-weight: 700; margin: 3px 20px 0 0; }
.pager { display: flex; gap: 2px; margin-top: 4px; }
.pager i { width: 55px; height: 30px; background: #a0a1a5; display: flex; align-items: center; justify-content: center; border-radius: 15px 0 0 15px; }
.pager i + i { border-radius: 0 15px 15px 0; }
.moon { margin: 0 18px 2px 22px; }
.expand { margin-right: 21px; }
.account { font-size: 13.500px; color: #47536a; white-space: nowrap; letter-spacing: .05px; }
.body { flex: 1; display: flex; min-height: 0; }
.sidebar { width: 370px; display: flex; align-items: flex-start; background: linear-gradient(90deg, #fafcff 335px, #eff2f7 370px); }
.lessons { width: 353px; height: 575px; overflow: hidden; list-style: none; }
.lessons li { height: 51px; padding: 1px 33px 0 40px; display: flex; align-items: center; font: 13px Inter, sans-serif; letter-spacing: -.28px; color: #43506a; }
.lessons li.current { height: 50px; background: #e4e8ee; }
.lessons svg { width: 18px; height: 18px; margin: -2px 12px 0 0; }
.lessons span { flex: 1; white-space: nowrap; }
.lessons i { width: 17px; height: 17px; border: 2px solid #e0e2e5; border-radius: 50%; margin-top: -3px; }
.current i { border-color: #dadde2; }
.bar { width: 17px; background: #f0f0f0; display: flex; flex-direction: column; align-items: center; }
.bar .thumb { width: 13px; background: #c1c1c1; }
.bar b { border: 4px solid transparent; width: 0; height: 0; }
.bar .up { border-top: 0; border-bottom-color: #454545; }
.bar .down { border-bottom: 0; border-top-color: #454545; margin-top: auto; }
.bar .pale { border-top-color: #999; }
.side-bar { height: 549px; padding: 7px 0; }
.side-bar .thumb { height: 169px; margin-top: 201px; }
.page-bar { padding: 7px 0; }
.page-bar .thumb { height: 522px; margin-top: 75px; }

.main { flex: 1; padding-left: 44px; position: relative; }
.slide {
  width: 901px; height: 487px; position: relative; border: 1px solid #404040; border-top: 0; border-bottom-color: #e2e2e2;
  background: radial-gradient(circle at 48% 82%, #fefefe 0, #f7f7f7 38%, #f0f0f0 80%);
}
.slide-title {
  position: absolute; left: 51px; top: 9px; padding-left: 16px; line-height: 46px;
  font-family: Inter, sans-serif; font-size: 40px; font-weight: 600; letter-spacing: .6px; color: #195f9e;
}
.slide-title::before { content: ""; position: absolute; left: 0; top: 10px; width: 7px; height: 31px; background: #0f78c8; }
.shapes { position: absolute; left: -1px; top: 0; }
.tags { position: absolute; width: 190px; display: flex; flex-direction: column; gap: 15px; }
.tags p { height: 17px; border: 1px solid #2f86cb; display: flex; font-size: 13px; line-height: 15px; font-weight: 700; text-align: right; color: #1b78be; }
.tags b { width: 92px; background: #0e78ca; color: #fff; padding-right: 8px; font-size: 12.500px; letter-spacing: -.65px; }
.tags span { flex: 1; padding-right: 9px; background: rgba(255,255,255,.5); white-space: nowrap; font-size: 13.300px; }
.t1 { left: 132.500px; top: 118px; }
.t2 { left: 132.500px; top: 303px; }
.t3 { left: 418px; top: 118px; }
.t4 { left: 645px; top: 233px; gap: 17px; }
.t5 { left: 383.500px; top: 369.500px; gap: 18px; }
.caption {
  position: absolute; left: 9px; top: 408px; width: 881px; height: 64px; padding-top: 3px; background: #000; color: #fff;
  font: 24px/28px "Liberation Sans", Arial, sans-serif; text-align: center; letter-spacing: -.42px; white-space: nowrap;
}
.watermark { position: absolute; left: 852px; top: 453px; }
.activate { padding: 9px 0 0 659px; color: #b4b4b4; white-space: nowrap; }
.activate p { font-size: 19px; line-height: 26px; }
.activate small { display: block; font-size: 14.500px; line-height: 19px; letter-spacing: -.04px; }
.voice { position: absolute; left: 1323px; top: 250px; width: 32px; height: 32px; border: 1px solid #aaa; border-radius: 50%; background: #fff; padding: 5px 0 0 8px; }
.voice svg { opacity: .55; }
.chat { position: absolute; right: 0; top: 288px; width: 38px; height: 50px; background: #2c78ee; border-radius: 4px 0 0 4px; display: flex; align-items: center; justify-content: center; padding: 5px 0 0 2px; }

/* taskbar */
.taskbar { height: 40px; flex: none; display: flex; color: #fff; background: linear-gradient(90deg, #304346 25%, #324445 70%, #36433d 80%, #3b3c30 90%, #444140 100%); }
.start { width: 48px; background: #484645; display: flex; align-items: center; justify-content: center; }
.search { width: 288px; background: #f2f2f2; border: 1px solid #b5b5b5; border-right: 0; display: flex; align-items: center; padding-left: 11px; color: #303030; }
.search span { flex: 1; margin-left: 11px; font-size: 15px; letter-spacing: -.5px; white-space: nowrap; }
.apps { width: 641px; display: grid; grid-template-columns: 48px 50px 45px 46px; grid-auto-flow: column; grid-auto-columns: 45px; }
.apps span { display: flex; align-items: center; justify-content: center; }
.apps .open { margin: 0 1px 0 0; border-bottom: 2px solid #76b9ed; padding-top: 2px; }
.apps .focus { background: #5b6a6b; }
.apps .split { margin-left: 4px; margin-right: 5px; }
.tray { flex: 1; display: flex; align-items: center; padding-left: 23px; }
.tray .temp { width: 54px; margin-left: 8px; font-size: 14px; letter-spacing: -.4px; }
.tray .temp + svg { margin-right: 12px; }
.tray svg:nth-of-type(n+3) { margin-right: 9px; }
.tray svg:nth-of-type(5) { margin-right: 10px; }
.tray .clock { width: 54px; margin: 0 17px 0 0; text-align: center; font-size: 12px; line-height: 18px; letter-spacing: -.45px; white-space: nowrap; }
.tray .peek { width: 1px; height: 40px; background: #777; }
```
